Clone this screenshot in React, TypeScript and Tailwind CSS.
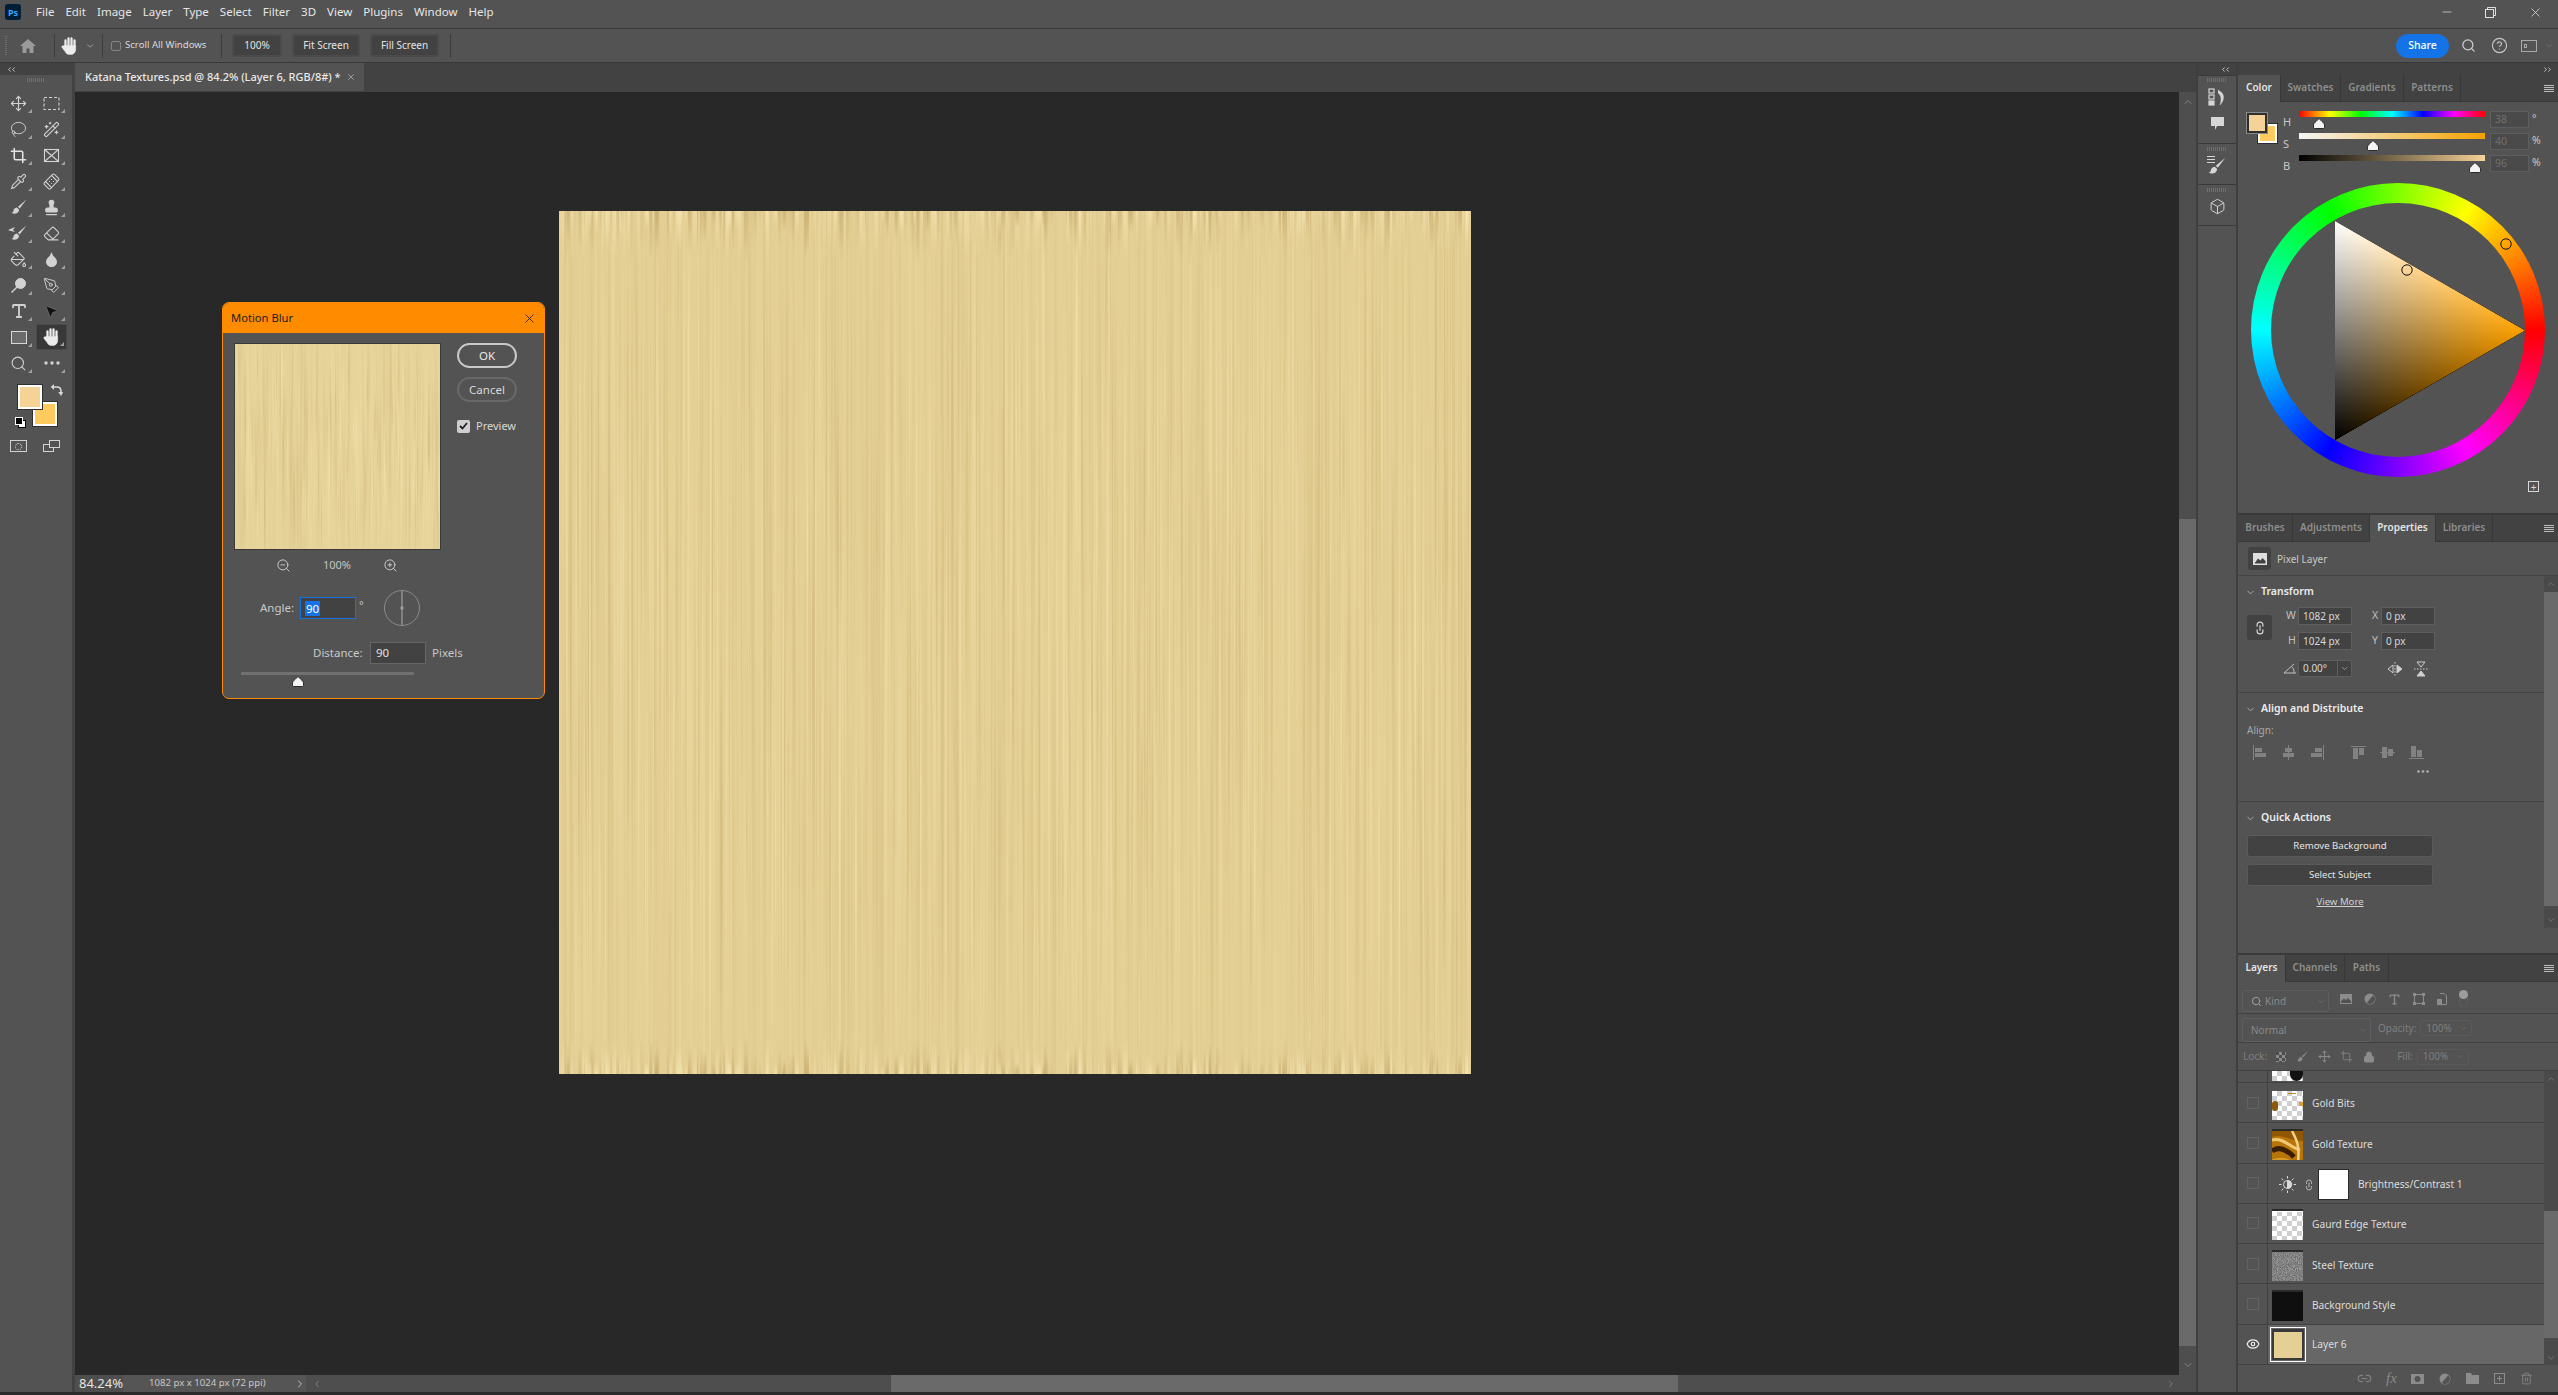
import { useMemo, type ReactNode } from 'react';
import {
  Bandage,
  Box,
  ChevronDown,
  ChevronLeft,
  ChevronRight,
  ChevronUp,
  CircleHelp,
  Crop,
  Droplet,
  Eraser,
  Eye,
  Lasso,
  Link2,
  Lock,
  Minus,
  Move,
  MousePointer2,
  PaintBucket,
  PenTool,
  Pipette,
  Search,
  Stamp,
  Trash2,
  Type,
  WandSparkles,
  X,
  ZoomIn,
  ZoomOut,
} from 'lucide-react';

const MENU = ['File', 'Edit', 'Image', 'Layer', 'Type', 'Select', 'Filter', '3D', 'View', 'Plugins', 'Window', 'Help'];

function rng(seed: number) {
  let a = seed;
  return () => {
    a = (a + 0x6d2b79f5) | 0;
    let t = Math.imul(a ^ (a >>> 15), 1 | a);
    t = (t + Math.imul(t ^ (t >>> 7), 61 | t)) ^ t;
    return ((t ^ (t >>> 14)) >>> 0) / 4294967296;
  };
}

function Texture({ w, h, seed, base, edges }: { w: number; h: number; seed: number; base: string; edges?: boolean }) {
  const data = useMemo(() => {
    const r = rng(seed);
    const stripes = Array.from({ length: Math.round(w * 0.5) }, () => {
      const q = r();
      return {
        x: r() * w,
        w: 0.5 + q * q * 2.5,
        light: r() > 0.5,
        o: 0.03 + r() * 0.1,
      };
    });
    const segments = Array.from({ length: Math.round(w * 1.6) }, () => {
      const len = h * (0.2 + r() * 0.7);
      return {
        x: r() * w,
        y: r() * (h - len * 0.5) - len * 0.25,
        h: len,
        w: 0.6 + r() * 1.4,
        light: r() > 0.5,
        o: 0.15 + r() * 0.4,
      };
    });
    const band = Array.from({ length: Math.round(w * 0.45) }, () => ({
      x: r() * w,
      w: 1 + r() * 3.5,
      h: 14 + r() * 40,
      light: r() > 0.5,
      o: 0.2 + r() * 0.5,
    }));
    return { stripes, segments, band };
  }, [w, h, seed]);
  const id = `tx${seed}`;
  return (
    <svg width={w} height={h} className="block">
      <defs>
        <linearGradient id={`${id}l`} x1="0" y1="0" x2="0" y2="1">
          <stop offset="0" stopColor="#f6e6b4" />
          <stop offset="1" stopColor="#f6e6b4" stopOpacity="0" />
        </linearGradient>
        <linearGradient id={`${id}d`} x1="0" y1="0" x2="0" y2="1">
          <stop offset="0" stopColor="#c9ae70" />
          <stop offset="1" stopColor="#c9ae70" stopOpacity="0" />
        </linearGradient>
        <linearGradient id={`${id}L`} x1="0" y1="1" x2="0" y2="0">
          <stop offset="0" stopColor="#f6e6b4" />
          <stop offset="1" stopColor="#f6e6b4" stopOpacity="0" />
        </linearGradient>
        <linearGradient id={`${id}D`} x1="0" y1="1" x2="0" y2="0">
          <stop offset="0" stopColor="#c9ae70" />
          <stop offset="1" stopColor="#c9ae70" stopOpacity="0" />
        </linearGradient>
        <linearGradient id={`${id}sl`} x1="0" y1="0" x2="0" y2="1">
          <stop offset="0" stopColor="#f4e3ae" stopOpacity="0" />
          <stop offset="0.5" stopColor="#f4e3ae" />
          <stop offset="1" stopColor="#f4e3ae" stopOpacity="0" />
        </linearGradient>
        <linearGradient id={`${id}sd`} x1="0" y1="0" x2="0" y2="1">
          <stop offset="0" stopColor="#d0b678" stopOpacity="0" />
          <stop offset="0.5" stopColor="#d0b678" />
          <stop offset="1" stopColor="#d0b678" stopOpacity="0" />
        </linearGradient>
      </defs>
      <rect width={w} height={h} fill={base} />
      {data.stripes.map((s, i) => (
        <rect key={i} x={s.x} y="0" width={s.w} height={h} fill={s.light ? '#f2e0aa' : '#d3b97b'} opacity={s.o} />
      ))}
      {data.segments.map((s, i) => (
        <rect key={i} x={s.x} y={s.y} width={s.w} height={s.h} fill={`url(#${id}${s.light ? 'sl' : 'sd'})`} opacity={s.o} />
      ))}
      {edges &&
        data.band.map((s, i) => (
          <g key={i} opacity={s.o}>
            <rect x={s.x} y="0" width={s.w} height={s.h} fill={`url(#${id}${s.light ? 'l' : 'd'})`} />
            <rect x={s.x} y={h - s.h * 0.7} width={s.w} height={s.h * 0.7} fill={`url(#${id}${s.light ? 'L' : 'D'})`} />
          </g>
        ))}
    </svg>
  );
}

function Grip({ className }: { className: string }) {
  return <div className={`h-[4px] bg-[repeating-linear-gradient(to_right,#6e6e6e_0_1px,transparent_1px_2px)] ${className}`} />;
}

function ChevronsGlyph({ right }: { right?: boolean }) {
  const Icon = right ? ChevronRight : ChevronLeft;
  return (
    <div className="flex -space-x-[3px] text-[#d0d0d0]">
      <Icon size={7} strokeWidth={3} />
      <Icon size={7} strokeWidth={3} />
    </div>
  );
}

function MenuLines() {
  return (
    <div className="flex w-[10px] flex-col gap-[1px]">
      <div className="h-[1px] bg-[#bdbdbd]" />
      <div className="h-[1px] bg-[#bdbdbd]" />
      <div className="h-[1px] bg-[#bdbdbd]" />
      <div className="h-[1px] bg-[#bdbdbd]" />
    </div>
  );
}

function PanelTabs({ tabs, active }: { tabs: { label: string; w: string }[]; active: string }) {
  return (
    <div className="flex h-[27px] shrink-0 items-stretch bg-[#424242]">
      {tabs.map((t) => (
        <div
          key={t.label}
          className={`flex items-center justify-center border-r border-[#383838] pb-[2px] text-[10px] font-semibold ${t.w} ${
            t.label === active ? 'bg-[#535353] text-[#e4e4e4]' : 'border-b text-[#8e8e8e]'
          }`}
        >
          {t.label}
        </div>
      ))}
      <div className="flex flex-1 items-center justify-end border-b border-[#383838] pr-[4px]">
        <MenuLines />
      </div>
    </div>
  );
}

function Arrow() {
  return (
    <svg width="4" height="4" className="absolute bottom-[3px] right-[2px]">
      <polygon points="4,0 4,4 0,4" fill="#a0a0a0" />
    </svg>
  );
}

function Tool({ children, corner = true, active }: { children: ReactNode; corner?: boolean; active?: boolean }) {
  return (
    <div
      className={`relative flex h-[26px] w-[31px] items-center justify-center rounded-[2px] text-[#d2d2d2] ${
        active ? 'border border-[#4a4a4a] bg-[#383838]' : ''
      }`}
    >
      {children}
      {corner && <Arrow />}
    </div>
  );
}

function HandGlyph({ size = 20 }: { size?: number }) {
  return (
    <svg width={size} height={size} viewBox="0 0 20 20" fill="#ececec" stroke="#ececec" strokeLinecap="round">
      <path d="M5.500 9.500V4.500M8.500 9V2.500M11.500 9V2.500M14.500 9.500V4.500" strokeWidth="2.300" fill="none" />
      <path d="M4.300 9.500h11.400V13c0 3.500-2 5.500-5 5.500H9.500c-2.300 0-3.400-1-4.400-3L2 11.500c-.8-1.300.8-2.500 1.800-1.500z" strokeWidth="0.5" />
    </svg>
  );
}

function BrushGlyph({ size = 18, fill = '#d2d2d2' }: { size?: number; fill?: string }) {
  return (
    <svg width={size} height={size} viewBox="0 0 18 18" fill={fill}>
      <path d="M16.500 1.500 8 8.700l1.700 1.800z" />
      <path d="M7 9.600c-2.600.2-3.400 2-3.600 3.400-.1 1-.9 1.700-1.900 1.800 2.300 1.800 7.300 1.300 7.600-3.100z" />
    </svg>
  );
}

function LeftToolbar() {
  return (
    <div className="flex w-[75px] shrink-0 flex-col border-r-[3px] border-[#424242]">
      <div className="flex h-[12px] shrink-0 items-center bg-[#424242] pl-[6px]">
        <ChevronsGlyph />
      </div>
      <Grip className="ml-[27px] mt-[3px] w-[18px] shrink-0" />
      <div className="ml-[3px] mt-[8px] grid w-[66px] grid-cols-[33px_33px]">
        <Tool><Move size={17} strokeWidth={1.6} /></Tool>
        <Tool>
          <svg width="17" height="15" fill="none" stroke="#d2d2d2" strokeWidth="1.1">
            <rect x="1" y="1.500" width="15" height="12" strokeDasharray="3 2" />
          </svg>
        </Tool>
        <Tool><Lasso size={17} strokeWidth={1.3} /></Tool>
        <Tool><WandSparkles size={17} strokeWidth={1.6} /></Tool>
        <Tool><Crop size={17} strokeWidth={2.2} color="#e2e2e2" /></Tool>
        <Tool>
          <svg width="17" height="15" fill="none" stroke="#d2d2d2" strokeWidth="1.1">
            <rect x="1.500" y="1.500" width="14" height="12" />
            <path d="M1.500 1.500l14 12M15.500 1.500l-14 12" />
          </svg>
        </Tool>
        <Tool><Pipette size={17} strokeWidth={1.5} /></Tool>
        <Tool><Bandage size={17} strokeWidth={1.5} className="-rotate-45" /></Tool>
        <Tool><BrushGlyph /></Tool>
        <Tool><Stamp size={17} strokeWidth={2} fill="#d2d2d2" /></Tool>
        <Tool>
          <div className="relative">
            <BrushGlyph />
            <svg width="8" height="6" className="absolute left-[-2px] top-[3px]" fill="#d2d2d2">
              <path d="M0 3 7 0 5 3 7 5 3 4z" />
            </svg>
          </div>
        </Tool>
        <Tool><Eraser size={17} strokeWidth={1.5} /></Tool>
        <Tool><PaintBucket size={17} strokeWidth={1.5} /></Tool>
        <Tool><Droplet size={17} strokeWidth={1.5} fill="#d2d2d2" /></Tool>
        <Tool>
          <svg width="17" height="17" fill="#d2d2d2" stroke="#d2d2d2">
            <circle cx="10.500" cy="6.500" r="5" />
            <path d="M7 10 1.500 15.500" strokeWidth="1.500" />
          </svg>
        </Tool>
        <Tool><PenTool size={17} strokeWidth={1.3} /></Tool>
        <Tool><Type size={18} strokeWidth={2.4} /></Tool>
        <Tool><MousePointer2 size={17} fill="#111" color="#777" strokeWidth={1} /></Tool>
        <Tool>
          <div className="h-[13px] w-[16px] border border-[#d8d8d8] bg-[#6b6b6b]" />
        </Tool>
        <Tool active><HandGlyph /></Tool>
        <Tool><Search size={17} strokeWidth={1.5} /></Tool>
        <Tool>
          <svg width="16" height="4" fill="#d2d2d2">
            <circle cx="2" cy="2" r="1.700" />
            <circle cx="8" cy="2" r="1.700" />
            <circle cx="14" cy="2" r="1.700" />
          </svg>
        </Tool>
      </div>
      <div className="relative ml-[15px] mt-[9px] h-[45px] w-[45px] shrink-0">
        <div className="absolute left-[18px] top-[17px] h-[24px] w-[24px] border-2 border-white bg-[#ffcb5e] outline outline-[#2f2f2f]" />
        <div className="absolute left-[3px] top-0 h-[24px] w-[24px] border-2 border-white bg-[#f5d296] outline outline-[#2f2f2f]" />
        <svg width="13" height="13" viewBox="0 0 13 13" className="absolute left-[35px] -top-[1px]" fill="none" stroke="#d8d8d8" strokeWidth="1.600">
          <path d="M2 3h5c2.500 0 4 1.500 4 4.500V10" />
          <path d="M4 .5 1 3l3 2.500M8.500 8l2.500 3.500L13 8" fill="#d8d8d8" strokeWidth="0.6" />
        </svg>
      </div>
      <div className="relative ml-[15px] h-[12px] w-[12px] shrink-0 -translate-y-[13px]">
        <div className="absolute left-[3px] top-[3px] h-[8px] w-[8px] border border-black bg-white" />
        <div className="absolute left-0 top-0 h-[8px] w-[8px] border border-white bg-black" />
      </div>
      <div className="ml-[10px] -mt-[2px] flex h-[12px] w-[50px] items-center justify-between">
        <div className="flex h-[12px] w-[17px] items-center justify-center border border-[#d2d2d2]">
          <div className="h-[7px] w-[7px] rounded-full border border-dotted border-[#d2d2d2]" />
        </div>
        <div className="relative h-[12px] w-[17px]">
          <div className="absolute bottom-0 left-0 h-[8px] w-[11px] border border-[#d2d2d2]" />
          <div className="absolute right-0 top-0 h-[8px] w-[11px] border border-[#d2d2d2] bg-[#535353]" />
        </div>
      </div>
    </div>
  );
}

function OptionButton({ w, label }: { w: string; label: string }) {
  return (
    <div className={`flex h-[23px] items-center justify-center rounded-[3px] border-2 border-[#4b4b4b] bg-[#424242] text-[10px] text-[#e2e2e2] ${w}`}>
      {label}
    </div>
  );
}

function Separator({ className }: { className: string }) {
  return <div className={`h-[24px] w-[1px] bg-[#3c3c3c] ${className}`} />;
}

function OptionsBar() {
  return (
    <div className="flex h-[34px] shrink-0 items-center border-b border-[#383838] pl-[5px]">
      <div className="h-[20px] w-[2px] bg-[repeating-linear-gradient(to_bottom,#6e6e6e_0_1px,transparent_1px_2px)]" />
      <svg width="16" height="14" viewBox="0 0 16 14" fill="#9a9a9a" className="ml-[13px]">
        <path d="M8 0 0 7h2.500v7h4V9.500h3V14h4V7H16z" />
      </svg>
      <Separator className="ml-[18px]" />
      <div className="ml-[5px]">
        <HandGlyph />
      </div>
      <ChevronDown size={10} color="#a8a8a8" className="ml-[5px]" />
      <Separator className="ml-[7px]" />
      <div className="ml-[8px] h-[10px] w-[10px] rounded-[2px] border border-[#848484]" />
      <span className="ml-[4px] w-[96px] text-[9.6px] text-[#d8d8d8]">Scroll All Windows</span>
      <Separator className="" />
      <div className="ml-[10px] flex items-center gap-[10px]">
        <OptionButton w="w-[50px]" label="100%" />
        <OptionButton w="w-[68px]" label="Fit Screen" />
        <OptionButton w="w-[69px]" label="Fill Screen" />
      </div>
      <Separator className="ml-[11px]" />
      <div className="ml-auto flex h-[24px] w-[53px] items-center justify-center rounded-full bg-[#1473e6] text-[10.5px] font-medium text-white">Share</div>
      <Search size={15} color="#d0d0d0" strokeWidth={2} className="ml-[12px]" />
      <CircleHelp size={17} color="#c8c8c8" strokeWidth={1.6} className="ml-[15px]" />
      <div className="ml-[13px] flex h-[12px] w-[16px] items-center border border-[#a8a8a8] pl-[2px]">
        <div className="h-[4px] w-[3px] border border-[#a8a8a8]" />
      </div>
      <ChevronDown size={11} color="#6e6e6e" className="ml-[7px] mr-[3px]" />
    </div>
  );
}

function Center() {
  return (
    <div className="flex w-[2121px] shrink-0 flex-col">
      <div className="flex h-[29px] shrink-0 bg-[#424242]">
        <div className="flex h-[28px] w-[289px] items-center bg-[#535353] pl-[10px]">
          <span className="w-[255px] whitespace-nowrap text-[11px] font-medium text-[#e8e8e8]">Katana Textures.psd @ 84.2% (Layer 6, RGB/8#) *</span>
          <X size={10} color="#a8a8a8" className="ml-[6px]" />
        </div>
      </div>
      <div className="flex h-[1283px] shrink-0">
        <div className="flex-1 bg-[#282828] pl-[484px] pt-[119px]">
          <Texture w={912} h={863} seed={11} base="#e4cf94" edges />
        </div>
        <div className="flex w-[17px] shrink-0 flex-col bg-[#4e4e4e]">
          <div className="flex h-[20px] items-center justify-center">
            <ChevronUp size={12} color="#858585" />
          </div>
          <div className="mt-[407px] h-[827px] bg-[#6a6a6a]" />
          <div className="flex-1" />
          <div className="flex h-[20px] items-center justify-center">
            <ChevronDown size={12} color="#858585" />
          </div>
        </div>
      </div>
      <div className="flex h-[17px] shrink-0 items-center bg-[#4e4e4e]">
        <span className="w-[48px] pl-[4px] text-[13px] text-[#e4e4e4]">84.24%</span>
        <div className="flex h-full w-[183px] items-center bg-[#555555] pl-[26px] text-[9.6px] text-[#c8c8c8]">
          <span className="w-[125px] whitespace-nowrap">1082 px x 1024 px (72 ppi)</span>
          <ChevronRight size={12} color="#c0c0c0" className="ml-[20px]" />
        </div>
        <ChevronLeft size={10} color="#888888" className="ml-[6px]" />
        <div className="ml-[569px] h-full w-[787px] bg-[#6a6a6a]" />
        <div className="flex-1" />
        <ChevronRight size={10} color="#888888" className="mr-[20px]" />
      </div>
    </div>
  );
}

function Dock() {
  return (
    <div className="flex w-[42px] shrink-0 flex-col border-x-2 border-[#3f3f3f]">
      <div className="flex h-[12px] shrink-0 items-center justify-end bg-[#424242] pr-[5px]">
        <ChevronsGlyph />
      </div>
      <div className="flex h-[69px] shrink-0 flex-col items-center border-y border-[#3a3a3a]">
        <Grip className="mt-[2px] w-[20px]" />
        <svg width="18" height="18" viewBox="0 0 18 18" fill="none" stroke="#d6d6d6" strokeWidth="1.200" className="mt-[6px]">
          <rect x="1" y="1" width="5" height="4" />
          <rect x="1" y="7" width="5" height="4" />
          <rect x="1" y="13" width="5" height="4" fill="#d6d6d6" />
          <path d="M10 2l3 2c3 2 4 8-1 13 2-6 1-10-2-12" fill="#d6d6d6" strokeWidth="0.4" />
        </svg>
        <svg width="15" height="15" viewBox="0 0 15 15" fill="#d6d6d6" className="mt-[10px]">
          <path d="M1 1h13v9H7l-2 4v-4H1z" />
        </svg>
      </div>
      <div className="flex h-[41px] shrink-0 flex-col items-center border-b border-[#3a3a3a]">
        <Grip className="mt-[3px] w-[20px]" />
        <div className="relative mt-[5px] h-[20px] w-[20px]">
          <BrushGlyph size={20} fill="#d6d6d6" />
          <div className="absolute left-0 top-0 h-[7px] w-[8px] bg-[repeating-linear-gradient(to_bottom,#d6d6d6_0_1px,transparent_1px_3px)]" />
        </div>
      </div>
      <div className="flex h-[41px] shrink-0 flex-col items-center border-b border-[#3a3a3a]">
        <Grip className="mt-[3px] w-[20px]" />
        <Box size={17} color="#d0d0d0" strokeWidth={1.4} className="mt-[6px]" />
      </div>
    </div>
  );
}

function Thumb({ className }: { className: string }) {
  return (
    <svg width="12" height="11" viewBox="0 0 12 11" className={`absolute ${className}`}>
      <path d="M6 .5 9 3.500c1 .8 2.500 2 2.500 3.500v2c0 1-.5 1.500-1.500 1.500H2C1 10.500.5 10 .5 9V7c0-1.500 1.500-2.700 2.500-3.500z" fill="#f4f4f4" stroke="#2c2c2c" />
    </svg>
  );
}

function ColorRow({ label, bar, pos, value, unit }: { label: string; bar: string; pos: string; value: string; unit: string }) {
  return (
    <div className="flex h-[17px] items-start">
      <span className="mt-[3px] w-[15px] text-[11px] text-[#c8c8c8]">{label}</span>
      <div className="relative ml-[1px] w-[186px]">
        <div className={`h-[6px] ${bar}`} />
        <Thumb className={`top-[7px] ${pos}`} />
      </div>
      <div className="ml-[5px] h-[17px] w-[39px] border border-[#5e5e5e] bg-[#4a4a4a] pl-[4px] text-[10.5px] leading-[15px] text-[#707070]">{value}</div>
      <span className="ml-[3px] text-[10.5px] text-[#c8c8c8]">{unit}</span>
    </div>
  );
}

function ColorWheel() {
  return (
    <div className="relative ml-[13px] mt-[5px] h-[294px] w-[294px] rounded-full bg-[conic-gradient(from_90deg,#f00,#f0f,#00f,#0ff,#0f0,#ff0,#f00)]">
      <div className="absolute inset-[20px] rounded-full bg-[#535353]" />
      <svg width="294" height="294" className="absolute left-0 top-0">
        <defs>
          <linearGradient id="triWhite" gradientUnits="userSpaceOnUse" x1="84" y1="38" x2="179" y2="202">
            <stop offset="0" stopColor="#fff" />
            <stop offset="1" stopColor="#000" />
          </linearGradient>
          <linearGradient id="triHue" gradientUnits="userSpaceOnUse" x1="274" y1="147.500" x2="84" y2="147.500">
            <stop offset="0" stopColor="#ffa200" />
            <stop offset="1" stopColor="#000" />
          </linearGradient>
        </defs>
        <g className="isolate">
          <polygon points="84,38 274,147.500 84,257" fill="#000" />
          <polygon points="84,38 274,147.500 84,257" fill="url(#triWhite)" className="mix-blend-plus-lighter" />
          <polygon points="84,38 274,147.500 84,257" fill="url(#triHue)" className="mix-blend-plus-lighter" />
        </g>
        <circle cx="156" cy="87" r="5.200" fill="none" stroke="#111" strokeWidth="1" />
        <circle cx="255" cy="61" r="5.200" fill="none" stroke="#111" strokeWidth="1" />
      </svg>
    </div>
  );
}

function ColorPanel() {
  return (
    <div className="relative flex h-[413px] shrink-0 flex-col border-b-2 border-[#3a3a3a]">
      <div className="mt-[9px] flex h-[67px] pl-[9px]">
        <div className="relative mt-[2px] h-[30px] w-[30px]">
          <div className="absolute left-[11px] top-[11px] h-[19px] w-[19px] border-2 border-white bg-[#ffcb5e] outline outline-[#2f2f2f]" />
          <div className="absolute left-0 top-0 h-[20px] w-[20px] border-2 border-[#2f2f2f] bg-[#f5d296] outline outline-[#8a8a8a]" />
        </div>
        <div className="ml-[6px] flex flex-col gap-[5px]">
          <ColorRow label="H" value="38" unit="°" pos="left-[14px]" bar="bg-[linear-gradient(to_right,#f00,#ff0,#0f0,#0ff,#00f,#f0f,#f00)]" />
          <ColorRow label="S" value="40" unit="%" pos="left-[68px]" bar="bg-[linear-gradient(to_right,#f5f5f5,#f5a200)]" />
          <ColorRow label="B" value="96" unit="%" pos="left-[170px]" bar="bg-[linear-gradient(to_right,#000,#f5d296)]" />
        </div>
      </div>
      <ColorWheel />
      <div className="absolute bottom-[21px] right-[19px] flex h-[11px] w-[11px] items-center justify-center border border-[#d8d8d8] text-[10px] leading-none text-[#d8d8d8]">+</div>
    </div>
  );
}

function Field({ value, w = 'w-[54px]' }: { value: string; w?: string }) {
  return <div className={`flex h-[18px] items-center border border-[#5e5e5e] bg-[#424242] pl-[4px] text-[10px] text-[#d8d8d8] ${w}`}>{value}</div>;
}

function SectionHead({ title }: { title: string }) {
  return (
    <div className="flex h-[16px] items-center pl-[7px]">
      <ChevronDown size={11} color="#b0b0b0" />
      <span className="ml-[5px] text-[10.5px] font-semibold text-[#ececec]">{title}</span>
    </div>
  );
}

function AlignIcon({ d, line }: { d: string; line: string }) {
  return (
    <svg width="15" height="15" viewBox="0 0 15 15" fill="#828282">
      <path d={line} stroke="#828282" strokeWidth="1" fill="none" />
      <path d={d} />
    </svg>
  );
}

function PropertiesPanel() {
  return (
    <div className="flex h-[440px] shrink-0 flex-col border-b-2 border-[#3a3a3a]">
      <PanelTabs
        active="Properties"
        tabs={[
          { label: 'Brushes', w: 'w-[55px]' },
          { label: 'Adjustments', w: 'w-[77px]' },
          { label: 'Properties', w: 'w-[66px]' },
          { label: 'Libraries', w: 'w-[57px]' },
        ]}
      />
      <div className="flex h-[34px] shrink-0 items-center border-b border-[#444444] pl-[10px]">
        <div className="flex h-[23px] w-[23px] items-center justify-center rounded-[3px] bg-[#424242]">
          <svg width="14" height="12" viewBox="0 0 14 12" fill="#dedede">
            <path d="M0 0h14v12H0zM1.500 10.500h11V8l-3-3-2 2.500L5 5.500z" fillRule="evenodd" />
            <circle cx="4" cy="3" r="1" />
          </svg>
        </div>
        <span className="ml-[6px] pt-[2px] text-[10px] text-[#c8c8c8]">Pixel Layer</span>
      </div>
      <div className="flex min-h-0 flex-1">
        <div className="flex-1">
          <div className="h-[117px] border-b border-[#444444] pt-[8px]">
            <SectionHead title="Transform" />
            <div className="mt-[7px] flex pl-[9px]">
              <div className="mt-[8px] flex h-[25px] w-[25px] items-center justify-center rounded-[3px] bg-[#424242]">
                <Link2 size={14} color="#d8d8d8" strokeWidth={2} className="rotate-90" />
              </div>
              <div className="ml-[14px] flex flex-col gap-[7px] text-[10.5px] text-[#c0c0c0]">
                <div className="flex items-center">
                  <span className="w-[12px]">W</span>
                  <Field value="1082 px" />
                  <span className="ml-[20px] w-[9px]">X</span>
                  <Field value="0 px" />
                </div>
                <div className="flex items-center">
                  <span className="w-[12px] pl-[2px]">H</span>
                  <Field value="1024 px" />
                  <span className="ml-[20px] w-[9px]">Y</span>
                  <Field value="0 px" />
                </div>
                <div className="mt-[3px] flex items-center">
                  <svg width="14" height="11" viewBox="0 0 14 11" fill="none" stroke="#c0c0c0" className="-ml-[3px] mr-[1px]">
                    <path d="M13 10H1L11 1" />
                    <path d="M9 4c2 2 2 4 2 6" />
                  </svg>
                  <div className="flex h-[17px] w-[54px] items-center rounded-[2px] border border-[#5e5e5e] bg-[#424242] pl-[4px] text-[10px] text-[#d8d8d8]">
                    <span className="w-[34px]">0.00°</span>
                    <div className="flex h-full flex-1 items-center justify-center border-l border-[#5e5e5e]">
                      <ChevronDown size={9} color="#a8a8a8" />
                    </div>
                  </div>
                  <svg width="16" height="14" viewBox="0 0 16 14" className="ml-[35px]" fill="#d0d0d0" stroke="#d0d0d0">
                    <path d="M6 3v8L1 7z" fill="none" />
                    <path d="M10 3v8l5-4z" />
                    <path d="M8 0v14" strokeDasharray="1.500 1.500" />
                  </svg>
                  <svg width="14" height="16" viewBox="0 0 14 16" className="ml-[11px]" fill="#d0d0d0" stroke="#d0d0d0">
                    <path d="M3 1h8L7 6z" fill="none" />
                    <path d="M3 15h8l-4-5z" />
                    <path d="M0 8h14" strokeDasharray="1.500 1.500" />
                  </svg>
                </div>
              </div>
            </div>
          </div>
          <div className="h-[109px] border-b border-[#444444] pt-[8px]">
            <SectionHead title="Align and Distribute" />
            <div className="ml-[9px] mt-[6px] text-[10px] text-[#a8a8a8]">Align:</div>
            <div className="ml-[14px] mt-[7px] flex">
              <div className="flex gap-[14px]">
                <AlignIcon line="M1.500 0v15" d="M3 3h7v4H3zM3 8h11v4H3z" />
                <AlignIcon line="M7.500 0v15" d="M4 3h7v4H4zM2 8h11v4H2z" />
                <AlignIcon line="M13.500 0v15" d="M5 3h7v4H5zM1 8h11v4H1z" />
              </div>
              <div className="ml-[26px] flex gap-[14px]">
                <AlignIcon line="M0 1.500h15" d="M2 3h5v11H2zM8 3h5v7H8z" />
                <AlignIcon line="M0 7.500h15" d="M2 2h5v11H2zM8 4h5v7H8z" />
                <AlignIcon line="M0 13.500h15" d="M2 1h5v11H2zM8 5h5v7H8z" />
              </div>
            </div>
            <svg width="12" height="3" fill="#b0b0b0" className="ml-[179px] mt-[10px]">
              <circle cx="1.500" cy="1.500" r="1.300" />
              <circle cx="6" cy="1.500" r="1.300" />
              <circle cx="10.500" cy="1.500" r="1.300" />
            </svg>
          </div>
          <div className="pt-[8px]">
            <SectionHead title="Quick Actions" />
            <div className="ml-[9px] mt-[9px] flex w-[186px] flex-col gap-[7px]">
              <div className="flex h-[22px] items-center justify-center rounded-[3px] border border-[#5a5a5a] bg-[#424242] text-[9.6px] text-[#e4e4e4]">Remove Background</div>
              <div className="flex h-[22px] items-center justify-center rounded-[3px] border border-[#5a5a5a] bg-[#424242] text-[9.6px] text-[#e4e4e4]">Select Subject</div>
            </div>
            <div className="ml-[9px] mt-[9px] w-[186px] text-center text-[9.6px] text-[#d0d0d0] underline">View More</div>
          </div>
        </div>
        <div className="mb-[25px] flex w-[14px] shrink-0 flex-col bg-[#4a4a4a]">
          <div className="flex h-[16px] shrink-0 items-center justify-center">
            <ChevronUp size={10} color="#7a7a7a" />
          </div>
          <div className="h-[314px] bg-[#6a6a6a]" />
          <div className="flex-1" />
          <div className="flex h-[16px] shrink-0 items-center justify-center">
            <ChevronDown size={10} color="#7a7a7a" />
          </div>
        </div>
      </div>
    </div>
  );
}

const checker = 'bg-[conic-gradient(#cfcfcf_25%,#ffffff_0_50%,#cfcfcf_0_75%,#ffffff_0)] bg-[length:10px_10px]';

function GoldThumb() {
  return (
    <svg width="31" height="31" viewBox="0 0 31 31" className="block">
      <rect width="31" height="31" fill="#b87608" />
      <path d="M0 6c10-4 18 4 31 4V0H0z" fill="#8f5703" />
      <path d="M0 9c12-3 18 8 28 10" stroke="#f3c878" strokeWidth="3" fill="none" />
      <path d="M0 20c8-6 16 0 22 6" stroke="#3a1e02" strokeWidth="5" fill="none" />
      <path d="M20 0c4 8 8 14 6 31" stroke="#f2cf8c" strokeWidth="2.500" fill="none" />
      <path d="M0 30c8-3 14-2 18 1" stroke="#d99a28" strokeWidth="3" fill="none" />
    </svg>
  );
}

function SteelThumb() {
  return (
    <svg width="31" height="31" className="block">
      <filter id="steelNoise">
        <feTurbulence type="fractalNoise" baseFrequency="0.9" numOctaves="2" seed="4" />
        <feColorMatrix values="0 0 0 0 0.55 0 0 0 0 0.55 0 0 0 0 0.55 0 0 0 1.2 -0.3" />
      </filter>
      <rect width="31" height="31" fill="#666666" />
      <rect width="31" height="31" filter="url(#steelNoise)" />
    </svg>
  );
}

function Box2({ children, className }: { children?: ReactNode; className?: string }) {
  return <div className={`h-[31px] w-[31px] overflow-hidden border-t-2 border-[#2a2a2a] ${className ?? ''}`}>{children}</div>;
}

function LayerRow({ name, thumb, visible }: { name: string; thumb: ReactNode; visible?: boolean }) {
  return (
    <div className="flex min-h-0 flex-1 items-stretch border-b border-[#414141]">
      <div className="flex w-[30px] shrink-0 items-center justify-center border-r border-[#414141]">
        {visible ? <Eye size={14} color="#f0f0f0" fill="#535353" strokeWidth={2} /> : <div className="h-[12px] w-[12px] border border-[#626262]" />}
      </div>
      <div className={`flex flex-1 items-center pl-[4px] ${visible ? 'bg-[#676767] pt-[1px]' : 'pt-[3px]'}`}>
        {thumb}
        <span className="ml-[9px] whitespace-nowrap text-[10.2px] text-[#dcdcdc]">{name}</span>
      </div>
    </div>
  );
}

function LayersPanel() {
  const dim = '#8c8c8c';
  return (
    <div className="flex h-[437px] shrink-0 flex-col">
      <PanelTabs
        active="Layers"
        tabs={[
          { label: 'Layers', w: 'w-[48px]' },
          { label: 'Channels', w: 'w-[59px]' },
          { label: 'Paths', w: 'w-[44px]' },
        ]}
      />
      <div className="flex h-[32px] shrink-0 items-end border-b border-[#414141] pb-[1px] pl-[4px]">
        <div className="flex h-[22px] w-[87px] items-center rounded-[3px] border border-[#5e5e5e] pl-[8px] text-[10px] text-[#8a8a8a]">
          <Search size={11} color="#a8a8a8" strokeWidth={2} />
          <span className="ml-[3px]">Kind</span>
          <ChevronDown size={9} color="#6e6e6e" className="ml-auto mr-[2px]" />
        </div>
        <div className="mb-[5px] ml-[11px] flex items-center gap-[12px]">
          <svg width="12" height="10" viewBox="0 0 12 10" fill="#8c8c8c">
            <path d="M0 0h12v10H0zM1 9h10V7L8 4 6 6 4 4.500 1 7z" fillRule="evenodd" />
          </svg>
          <svg width="12" height="12" viewBox="0 0 12 12">
            <circle cx="6" cy="6" r="5.500" fill="#8c8c8c" />
            <path d="M6 11A5 5 0 0 0 6 1z" fill="#535353" transform="rotate(40 6 6)" />
          </svg>
          <Type size={13} color={dim} strokeWidth={2.600} />
          <svg width="12" height="12" fill="none" stroke="#8c8c8c">
            <rect x="1.500" y="1.500" width="9" height="9" />
            <rect x="0" y="0" width="2.500" height="2.500" fill="#8c8c8c" />
            <rect x="9.500" y="0" width="2.500" height="2.500" fill="#8c8c8c" />
            <rect x="0" y="9.500" width="2.500" height="2.500" fill="#8c8c8c" />
            <rect x="9.500" y="9.500" width="2.500" height="2.500" fill="#8c8c8c" />
          </svg>
          <svg width="10" height="12" viewBox="0 0 10 12" fill="none" stroke="#8c8c8c">
            <path d="M3 .5h4l2.500 2.500v8.500h-5" />
            <rect x="0" y="6" width="5" height="6" fill="#8c8c8c" stroke="none" />
          </svg>
          <div className="relative h-[16px] w-[9px] rounded-full border border-[#5e5e5e]">
            <div className="absolute -left-[1px] -top-[2px] h-[9px] w-[9px] rounded-full bg-[#9c9c9c]" />
          </div>
        </div>
      </div>
      <div className="flex h-[29px] shrink-0 items-center border-b border-[#414141] pl-[4px]">
        <div className="flex h-[24px] w-[129px] items-center self-end rounded-[2px] border border-[#5e5e5e] pl-[8px] text-[10px] text-[#8a8a8a]">
          Normal
          <ChevronDown size={9} color="#6e6e6e" className="ml-auto mr-[2px]" />
        </div>
        <span className="ml-[7px] text-[10px] text-[#7e7e7e]">Opacity:</span>
        <div className="ml-[4px] flex h-[16px] w-[52px] items-center rounded-[2px] border border-[#5a5a5a] pl-[5px] text-[10px] text-[#7e7e7e]">
          <span className="w-[30px]">100%</span>
          <ChevronDown size={9} color="#6e6e6e" className="ml-[3px]" />
        </div>
      </div>
      <div className="flex h-[28px] shrink-0 items-center border-b border-[#414141] pl-[5px]">
        <span className="text-[10px] text-[#7e7e7e]">Lock:</span>
        <div className="ml-[9px] h-[10px] w-[10px] bg-[conic-gradient(#8c8c8c_25%,#4c4c4c_0_50%,#8c8c8c_0_75%,#4c4c4c_0)] bg-[length:6px_6px]" />
        <div className="ml-[10px]">
          <BrushGlyph size={13} fill="#8c8c8c" />
        </div>
        <Move size={13} color={dim} strokeWidth={1.800} className="ml-[9px]" />
        <Crop size={13} color={dim} strokeWidth={1.400} className="ml-[9px]" />
        <Lock size={12} color={dim} fill={dim} strokeWidth={2} className="ml-[10px]" />
        <span className="ml-[22px] text-[10px] text-[#7e7e7e]">Fill:</span>
        <div className="ml-[4px] flex h-[16px] w-[52px] items-center rounded-[2px] border border-[#5a5a5a] pl-[5px] text-[10px] text-[#7e7e7e]">
          <span className="w-[30px]">100%</span>
          <ChevronDown size={9} color="#6e6e6e" className="ml-[3px]" />
        </div>
      </div>
      <div className="flex h-[294px] shrink-0">
        <div className="flex min-w-0 flex-1 flex-col">
          <div className="flex h-[12px] shrink-0 border-b border-[#414141]">
            <div className="w-[30px] border-r border-[#414141]" />
            <div className={`ml-[4px] flex h-[10px] w-[31px] justify-end overflow-hidden ${checker}`}>
              <div className="h-[10px] w-[13px] rounded-b-full bg-[#111111]" />
            </div>
          </div>
          <LayerRow
            name="Gold Bits"
            thumb={
              <Box2 className={`relative border-[#555] ${checker}`}>
                <div className="absolute left-0 top-[10px] h-[10px] w-[6px] rounded-full bg-[#8a5a0a]" />
                <div className="absolute right-0 top-[11px] h-[4px] w-[4px] bg-[#d8a030]" />
                <div className="absolute left-[16px] top-[2px] h-[1px] w-[8px] bg-[#c08a20]" />
              </Box2>
            }
          />
          <LayerRow name="Gold Texture" thumb={<Box2><GoldThumb /></Box2>} />
          <LayerRow
            name="Brightness/Contrast 1"
            thumb={
              <div className="flex items-center pl-[7px]">
                <svg width="17" height="17" viewBox="0 0 17 17" stroke="#d8d8d8" fill="#d8d8d8">
                  <circle cx="8.500" cy="8.500" r="4" fill="none" />
                  <path d="M8.500 4.500a4 4 0 0 1 0 8z" />
                  <path d="M8.500 0v2.500M8.500 14.500V17M0 8.500h2.500M14.500 8.500H17M2.500 2.500l1.800 1.800M12.700 12.700l1.800 1.800M2.500 14.500l1.800-1.800M12.700 4.300l1.800-1.800" />
                </svg>
                <Link2 size={12} color="#b8b8b8" strokeWidth={2} className="ml-[7px] rotate-90" />
                <div className="ml-[3px] h-[31px] w-[31px] border border-[#2a2a2a] bg-white" />
              </div>
            }
          />
          <LayerRow
            name="Gaurd Edge Texture"
            thumb={
              <Box2 className={checker}>
                <div className="h-[1px] bg-white" />
              </Box2>
            }
          />
          <LayerRow name="Steel Texture" thumb={<Box2><SteelThumb /></Box2>} />
          <LayerRow name="Background Style" thumb={<Box2 className="bg-[#0f0f0f]" />} />
          <LayerRow
            visible
            name="Layer 6"
            thumb={
              <div className="-ml-[2px] -mr-[3px] h-[35px] w-[36px] border border-white p-[1px]">
                <div className="h-full w-full border-2 border-t-[3px] border-[#3a3a3a] bg-[#e4cf94]" />
              </div>
            }
          />
        </div>
        <div className="flex w-[14px] shrink-0 flex-col bg-[#4a4a4a]">
          <div className="flex h-[16px] items-center justify-center">
            <ChevronUp size={10} color="#7a7a7a" />
          </div>
          <div className="mt-[124px] h-[127px] bg-[#6a6a6a]" />
          <div className="flex-1" />
          <div className="flex h-[14px] items-center justify-center">
            <ChevronDown size={10} color="#7a7a7a" />
          </div>
        </div>
      </div>
      <div className="flex h-[27px] shrink-0 items-center pl-[119px]">
        <Link2 size={15} color="#7e7e7e" strokeWidth={2} />
        <span className="ml-[14px] w-[20px] font-['Liberation_Serif',serif] text-[15px] italic text-[#8a8a8a]">fx</span>
        <svg width="13" height="10" viewBox="0 0 13 10" className="ml-[5px]">
          <path d="M0 0h13v10H0zM6.500 2a3 3 0 1 0 0 6 3 3 0 0 0 0-6z" fill="#8c8c8c" fillRule="evenodd" />
        </svg>
        <svg width="12" height="12" viewBox="0 0 12 12" className="ml-[15px]">
          <circle cx="6" cy="6" r="5.500" fill="#8c8c8c" />
          <path d="M6 11A5 5 0 0 0 6 1z" fill="#535353" transform="rotate(40 6 6)" />
        </svg>
        <svg width="13" height="11" viewBox="0 0 13 11" fill="#8c8c8c" className="ml-[15px]">
          <path d="M0 0h5l1 2h7v9H0z" />
        </svg>
        <svg width="11" height="11" fill="none" stroke="#8c8c8c" className="ml-[15px]">
          <rect x=".5" y=".5" width="10" height="10" />
          <path d="M5.500 3v5M3 5.500h5" />
        </svg>
        <Trash2 size={13} color={dim} strokeWidth={1.500} className="ml-[15px]" />
      </div>
    </div>
  );
}

function RightPanels() {
  return (
    <div className="flex w-[320px] shrink-0 flex-col">
      <div className="flex h-[12px] shrink-0 items-center justify-end bg-[#424242] pr-[5px]">
        <ChevronsGlyph right />
      </div>
      <PanelTabs
        active="Color"
        tabs={[
          { label: 'Color', w: 'w-[43px]' },
          { label: 'Swatches', w: 'w-[60px]' },
          { label: 'Gradients', w: 'w-[63px]' },
          { label: 'Patterns', w: 'w-[57px]' },
        ]}
      />
      <ColorPanel />
      <PropertiesPanel />
      <LayersPanel />
    </div>
  );
}

function MotionBlurDialog() {
  return (
    <div className="absolute left-[222px] top-[302px] h-[397px] w-[323px] overflow-hidden rounded-[7px] border border-[#ff8c00] bg-[#535353]">
      <div className="flex h-[30px] items-center justify-between bg-[#ff8c00] pl-[8px] pr-[7px] text-[11.2px] text-[#1d1d1d]">
        Motion Blur
        <X size={15} color="#1d1d1d" strokeWidth={1.3} />
      </div>
      <div className="pl-[11px] pt-[10px]">
        <div className="flex">
          <div className="h-[207px] w-[207px] border border-[#3a3a3a]">
            <Texture w={205} h={205} seed={27} base="#e6d49b" />
          </div>
          <div className="ml-[16px]">
            <div className="flex h-[25px] w-[60px] items-center justify-center rounded-full border-2 border-[#c8c8c8] text-[11.5px] text-[#e8e8e8]">OK</div>
            <div className="mt-[9px] flex h-[25px] w-[60px] items-center justify-center rounded-full border-2 border-[#686868] text-[11.5px] text-[#d8d8d8]">Cancel</div>
            <div className="mt-[16px] flex items-center">
              <div className="flex h-[13px] w-[13px] items-center justify-center rounded-[2px] bg-[#cfcfcf]">
                <svg width="9" height="8" viewBox="0 0 9 8" fill="none" stroke="#222" strokeWidth="1.800">
                  <path d="M1 4l2.500 2.500L8 1" />
                </svg>
              </div>
              <span className="ml-[6px] text-[11px] text-[#d8d8d8]">Preview</span>
            </div>
          </div>
        </div>
        <div className="mt-[7px] flex h-[17px] w-[206px] items-center justify-center text-[11px] text-[#c4c4c4]">
          <ZoomOut size={15} strokeWidth={1.500} color="#d0d0d0" />
          <span className="mx-[29px] w-[34px] text-center">100%</span>
          <ZoomIn size={15} strokeWidth={1.500} color="#d0d0d0" />
        </div>
        <div className="ml-[26px] mt-[23px] flex h-[22px] items-center">
          <span className="w-[40px] text-[11.5px] text-[#c8c8c8]">Angle:</span>
          <div className="flex h-[22px] w-[56px] items-center border border-[#1473e6] bg-[#424242] pl-[4px]">
            <span className="bg-[#1473e6] px-[1px] text-[11.5px] leading-[15px] text-white">90</span>
          </div>
          <span className="ml-[3px] -translate-y-[3px] text-[11px] text-[#c8c8c8]">°</span>
          <svg width="38" height="38" viewBox="0 0 38 38" className="ml-[19px]" fill="none" stroke="#8c8c8c">
            <circle cx="19" cy="19" r="17.500" />
            <path d="M19 2v34" strokeWidth="1.600" />
            <circle cx="19" cy="19" r="1.700" fill="#a0a0a0" stroke="none" />
          </svg>
        </div>
        <div className="ml-[79px] mt-[23px] flex h-[22px] items-center">
          <span className="w-[57px] text-[11.5px] text-[#c8c8c8]">Distance:</span>
          <div className="flex h-[22px] w-[56px] items-center border border-[#666666] bg-[#424242] pl-[5px] text-[11.5px] text-[#e0e0e0]">90</div>
          <span className="ml-[6px] text-[11.5px] text-[#c8c8c8]">Pixels</span>
        </div>
        <div className="relative ml-[7px] mt-[8px] h-[3px] w-[173px] bg-[#707070]">
          <Thumb className="left-[51px] top-[4px]" />
        </div>
      </div>
    </div>
  );
}

export default function App() {
  return (
    <div className="relative flex h-[1395px] w-[2558px] flex-col overflow-hidden bg-[#535353] font-['Noto_Sans',sans-serif] text-[#d8d8d8]">
      <div className="flex h-[29px] shrink-0 items-center border-b border-[#3a3a3a] pb-[4px] pl-[5px]">
        <div className="flex h-[16px] w-[16px] items-center justify-center rounded-[3px] bg-[#001e36] text-[9px] font-bold leading-none text-[#31a8ff]">Ps</div>
        <div className="ml-[15px] flex gap-[11px] text-[11.5px] text-[#e6e6e6]">
          {MENU.map((m) => (
            <span key={m}>{m}</span>
          ))}
        </div>
        <div className="ml-auto flex items-center text-[#e0e0e0]">
          <Minus size={14} strokeWidth={1.200} />
          <svg width="11" height="11" fill="none" stroke="#e0e0e0" className="ml-[31px]">
            <rect x=".5" y="2.500" width="8" height="8" />
            <path d="M2.500 2.500v-2h8v8h-2" />
          </svg>
          <X size={15} strokeWidth={1.200} className="ml-[32px] mr-[15px]" />
        </div>
      </div>
      <OptionsBar />
      <div className="flex h-[1329px] shrink-0">
        <LeftToolbar />
        <Center />
        <Dock />
        <RightPanels />
      </div>
      <div className="flex-1 bg-[#2b2b2b]" />
      <MotionBlurDialog />
    </div>
  );
}
